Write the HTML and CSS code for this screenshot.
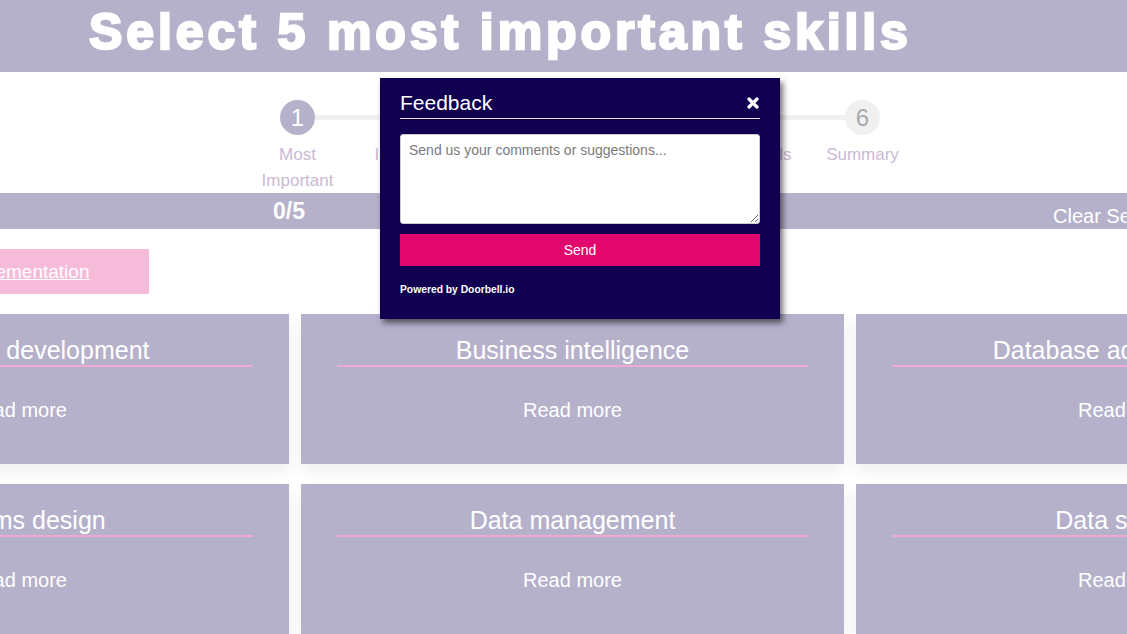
FILE: index.html
```html
<!DOCTYPE html>
<html lang="en">
<head>
<meta charset="utf-8">
<title>Select 5 most important skills</title>
<link rel="stylesheet" href="styles.css">
</head>
<body>
<div class="page">
  <header class="hero">
    <h1 class="hero-title">Select 5 most important skills</h1>
  </header>

  <ol class="stepper">
    <li class="step active"><span class="dot">1</span><span class="label">Most Important</span></li>
    <li class="step"><span class="dot">2</span><span class="label">Important</span></li>
    <li class="step"><span class="dot">3</span><span class="label">Useful</span></li>
    <li class="step"><span class="dot">4</span><span class="label">Levels</span></li>
    <li class="step"><span class="dot">5</span><span class="label">Other skills</span></li>
    <li class="step"><span class="dot">6</span><span class="label">Summary</span></li>
  </ol>

  <div class="countbar">
    <span class="count">0/5</span>
    <button class="clear" type="button">Clear Selection</button>
  </div>

  <div class="actions">
    <a class="pill" href="#">Skills implementation</a>
  </div>

  <div class="grid">
    <div class="card"><h3 class="card-title">Enterprise development</h3><a class="more" href="#">Read more</a></div>
    <div class="card"><h3 class="card-title">Business intelligence</h3><a class="more" href="#">Read more</a></div>
    <div class="card"><h3 class="card-title">Database administration</h3><a class="more" href="#">Read more</a></div>
    <div class="card"><h3 class="card-title">Systems design</h3><a class="more" href="#">Read more</a></div>
    <div class="card"><h3 class="card-title">Data management</h3><a class="more" href="#">Read more</a></div>
    <div class="card"><h3 class="card-title">Data science</h3><a class="more" href="#">Read more</a></div>
  </div>
</div>

<div class="modal">
  <div class="modal-head">
    <span class="modal-title">Feedback</span>
    <svg class="close" width="12" height="12" viewBox="0 0 12 12" aria-hidden="true">
      <path d="M2 2 L10 10 M10 2 L2 10" stroke="#ffffff" stroke-width="3.2" stroke-linecap="round"/>
    </svg>
  </div>
  <textarea class="feedback-text" placeholder="Send us your comments or suggestions..."></textarea>
  <button class="send" type="button">Send</button>
  <div class="powered">Powered by Doorbell.io</div>
</div>
</body>
</html>
```

FILE: styles.css
```css
html, body {
  margin: 0;
  padding: 0;
  overflow: hidden;
  background: #ffffff;
}

body {
  font-family: "Liberation Sans", Arial, sans-serif;
  width: 1127px;
  height: 634px;
  position: relative;
}

.page {
  width: 1653px;
  margin-left: -254px;
}

/* Header */
.hero {
  background: #b6b1ca;
  height: 72px;
  box-sizing: border-box;
  padding-left: 343px;
}

.hero-title {
  margin: 0;
  font-family: "Liberation Sans", Arial, sans-serif;
  font-weight: 700;
  font-size: 50px;
  line-height: 64px;
  letter-spacing: 3.9px;
  color: #ffffff;
  -webkit-text-stroke: 2.4px #ffffff;
  white-space: nowrap;
}

/* Stepper */
.stepper {
  list-style: none;
  margin: 28px 0 0;
  padding: 0 0 0 495px;
  display: flex;
  position: relative;
  z-index: 0;
}

.step {
  width: 113px;
  display: flex;
  flex-direction: column;
  align-items: center;
  position: relative;
}

.step:not(:last-child)::after {
  content: "";
  position: absolute;
  left: 50%;
  top: 15px;
  width: 100%;
  height: 5px;
  background: #f0f0f0;
  z-index: -1;
}

.dot {
  width: 35px;
  height: 35px;
  border-radius: 50%;
  background: #f0f0f0;
  color: #aaaaaa;
  font-size: 24px;
  line-height: 35px;
  text-align: center;
}

.step.active .dot {
  background: #b6b1ca;
  color: #ffffff;
}

.label {
  margin-top: 7px;
  font-size: 17px;
  line-height: 26px;
  color: #cbbad5;
  text-align: center;
  width: 100px;
}

/* Count bar */
.countbar {
  margin-top: -1px;
  background: #b6b1ca;
  height: 36px;
  display: flex;
  align-items: center;
  color: #ffffff;
}

.count {
  width: 100px;
  margin-left: 493px;
  text-align: center;
  font-weight: 700;
  font-size: 23px;
}

.clear {
  margin-left: 714px;
  padding: 10px 0 0;
  background: none;
  border: none;
  color: #ffffff;
  font-family: "Liberation Sans", Arial, sans-serif;
  font-size: 20px;
  white-space: nowrap;
}

/* Action pill */
.actions {
  margin-top: 20px;
  padding-left: 105px;
  display: flex;
}

.pill {
  display: block;
  height: 45px;
  line-height: 45px;
  padding: 0 60px;
  background: #f6bbd9;
  color: #ffffff;
  font-size: 19px;
  text-decoration: underline;
}

/* Cards */
.grid {
  margin-top: 20px;
  display: grid;
  grid-template-columns: repeat(3, 543px);
  grid-auto-rows: 150px;
  column-gap: 12px;
  row-gap: 20px;
}

.card {
  background: #b6b1ca;
  padding: 21px 36px 0;
  text-align: center;
  color: #ffffff;
  box-shadow: 0 7px 14px rgba(0, 0, 0, 0.07);
}

.card-title {
  margin: 0;
  font-weight: 400;
  font-size: 25px;
  line-height: 30px;
  padding-bottom: 0;
  border-bottom: 2px solid #eeaad2;
  white-space: nowrap;
}

.more {
  display: block;
  margin-top: 31px;
  font-size: 20px;
  line-height: 24px;
  color: #ffffff;
  text-decoration: none;
}

/* Feedback modal */
.modal {
  position: absolute;
  left: 380px;
  top: 78px;
  width: 400px;
  box-sizing: border-box;
  padding: 13px 20px 23px;
  background: #10004f;
  box-shadow: 3px 4px 6px rgba(0, 0, 0, 0.55);
  color: #ffffff;
}

.modal-head {
  display: flex;
  align-items: center;
  justify-content: space-between;
  padding-bottom: 3px;
  border-bottom: 1px solid #e8e8f0;
}

.modal-title {
  font-size: 21px;
  line-height: 24px;
}

.close {
  display: block;
  margin-right: 1px;
}

.feedback-text {
  display: block;
  margin-top: 15px;
  width: 100%;
  height: 90px;
  box-sizing: border-box;
  padding: 7px 8px;
  border: 1px solid #cccccc;
  border-radius: 3px;
  background: #ffffff;
  font-family: "Liberation Sans", Arial, sans-serif;
  font-size: 14px;
  color: #333333;
  resize: vertical;
}

.feedback-text::placeholder {
  color: #7a7a7a;
}

.send {
  display: block;
  margin-top: 10px;
  width: 100%;
  height: 32px;
  border: none;
  background: #e2076d;
  color: #ffffff;
  font-family: "Liberation Sans", Arial, sans-serif;
  font-size: 14px;
}

.powered {
  margin-top: 18px;
  font-size: 10.3px;
  line-height: 12px;
  font-weight: 700;
}
```
